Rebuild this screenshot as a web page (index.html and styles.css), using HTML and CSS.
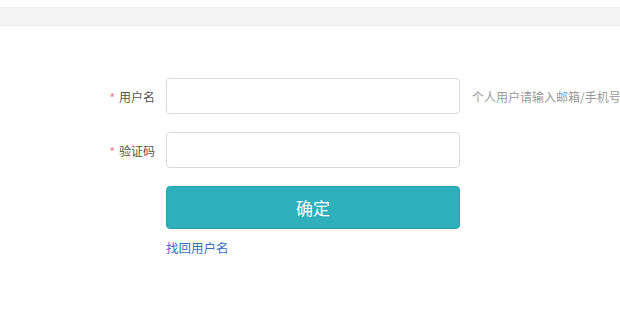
FILE: index.html
```html
<!DOCTYPE html>
<html lang="zh-CN">
<head>
<meta charset="utf-8">
<title>找回用户名</title>
<link rel="stylesheet" href="styles.css">
</head>
<body>
<div class="topbar"></div>
<form class="form">
  <div class="row">
    <label class="label"><span class="req">*</span>用户名</label>
    <input class="input" type="text">
    <span class="hint">个人用户请输入邮箱/手机号</span>
  </div>
  <div class="row">
    <label class="label"><span class="req">*</span>验证码</label>
    <input class="input" type="text">
    <span class="hint"></span>
  </div>
  <div class="row">
    <span class="label"></span>
    <button class="btn" type="button">确定</button>
  </div>
  <div class="row link-row">
    <span class="label"></span>
    <a class="link" href="#">找回用户名</a>
  </div>
</form>
</body>
</html>
```
FILE: styles.css
```css
html, body {
  margin: 0;
  padding: 0;
  background: #fff;
  overflow: hidden;
  font-family: "Noto Sans CJK SC", "Noto Sans", sans-serif;
}
.topbar {
  margin-top: 7px;
  height: 19px;
  background: #f4f4f4;
  border-top: 1px solid #efefef;
  border-bottom: 1px solid #efefef;
  box-sizing: border-box;
}
.form {
  margin-top: 52px;
  display: flex;
  flex-direction: column;
  gap: 18px;
}
.row {
  display: grid;
  grid-template-columns: 155px 294px auto;
  column-gap: 11px;
  align-items: center;
}
.label {
  text-align: right;
  font-size: 12px;
  color: #555;
  white-space: nowrap;
}
.req {
  color: #e57c7c;
  font-size: 12px;
  margin-right: 4px;
  position: relative;
  top: 1px;
}
.input {
  box-sizing: border-box;
  width: 294px;
  height: 36px;
  border: 1px solid #d9d9d9;
  border-radius: 4px;
  margin: 0;
  padding: 0 10px;
  outline: none;
  background: #fff;
}
.hint {
  font-size: 12px;
  color: #999;
  white-space: nowrap;
  margin-left: 1px;
}
.btn {
  box-sizing: border-box;
  width: 294px;
  height: 43px;
  margin: 0;
  border: 1px solid #29a4ae;
  border-radius: 4px;
  background: #2eafbb;
  color: #fff;
  font-family: "Noto Sans CJK SC", "Noto Sans", sans-serif;
  font-size: 17px;
  cursor: pointer;
}
.link-row {
  margin-top: -8px;
}
.link {
  font-size: 12.5px;
  color: #3370c3;
  text-decoration: none;
  line-height: 18px;
}
```
